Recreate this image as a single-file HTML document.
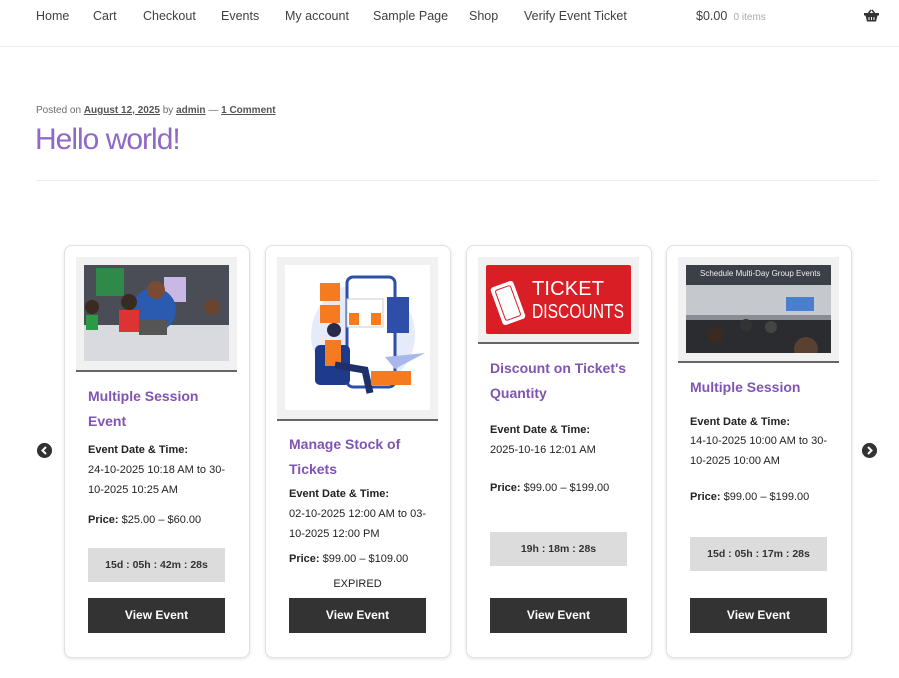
<!DOCTYPE html>
<html><head><meta charset="utf-8"><style>
*{margin:0;padding:0;box-sizing:border-box}
body{width:899px;height:678px;background:#fff;font-family:"Liberation Sans",sans-serif;color:#333;position:relative;overflow:hidden}
.a{position:absolute;white-space:nowrap}
.nav{top:8px;font-size:12.5px;color:#404040;line-height:16px}
.hr{position:absolute;left:0;width:899px;height:1px;background:#eee}
.card{position:absolute;top:245px;height:413px;width:186px;border:1px solid #e2e2e2;border-radius:8px;box-shadow:0 1px 3px rgba(0,0,0,.12);background:#fff}
.imgbox{position:absolute;background:#f1f1f1;border-bottom:2px solid #666}
.t{font-size:14px;color:#7f54b3;line-height:20px;font-weight:bold}
.l{font-size:11px;line-height:20px;color:#222}
.b{font-weight:bold}
.cd{position:absolute;width:137px;height:34px;background:#dcdcdc;font-size:10.5px;font-weight:bold;color:#333;text-align:center;line-height:34px}
.btn{position:absolute;width:137px;height:35px;top:598px;background:#333;color:#fff;font-size:12px;font-weight:bold;text-align:center;line-height:35px}
.arr{position:absolute;width:15px;height:15px;border-radius:50%;background:#333;top:443px}
</style></head><body>
<div class="a nav" style="left:36px">Home</div>
<div class="a nav" style="left:93px">Cart</div>
<div class="a nav" style="left:143px">Checkout</div>
<div class="a nav" style="left:221px">Events</div>
<div class="a nav" style="left:285px">My account</div>
<div class="a nav" style="left:373px">Sample Page</div>
<div class="a nav" style="left:469px">Shop</div>
<div class="a nav" style="left:524px">Verify Event Ticket</div>
<div class="a nav" style="left:696px">$0.00 <span style="font-size:10px;color:#aaa">&nbsp;0 items</span></div>
<svg class="a" style="left:864px;top:9px" width="15" height="13" viewBox="0 0 15 13"><path d="M4 5 L7 1 M11 5 L8 1" stroke="#333" stroke-width="1.5" fill="none"/><rect x="0" y="4" width="15" height="2.5" fill="#333"/><path d="M1.5 6.5 H13.5 L12 12.5 H3 Z" fill="#333"/><path d="M5 8v3M7.5 8v3M10 8v3" stroke="#fff" stroke-width="1"/></svg>
<div class="hr" style="top:46px"></div>
<div class="a" style="left:36px;top:105px;font-size:10px;color:#6d6d6d">Posted on <u style="color:#555;font-weight:bold">August 12, 2025</u> by <u style="color:#555;font-weight:bold">admin</u> — <u style="color:#555;font-weight:bold">1 Comment</u></div>
<div class="a" style="left:35px;top:123px;font-size:30px;color:#9068c8;letter-spacing:-1px">Hello world!</div>
<div class="hr" style="top:180px;left:36px;width:843px"></div>

<div class="card" style="left:64px"></div>
<div class="card" style="left:265px"></div>
<div class="card" style="left:466px"></div>
<div class="card" style="left:666px"></div>

<div class="imgbox" style="left:76px;top:257px;width:161px;height:115px"></div>
<svg class="a" style="left:84px;top:265px" width="145" height="96"><rect width="145" height="96" fill="#4a4d55"/><rect y="60" width="145" height="36" fill="#d8dadf"/><rect x="12" y="3" width="28" height="28" fill="#2f8a4a"/><rect x="80" y="12" width="22" height="25" fill="#c9b8e4"/><ellipse cx="70" cy="45" rx="22" ry="22" fill="#2a5bb0"/><circle cx="72" cy="25" r="9" fill="#7a4b34"/><circle cx="45" cy="37" r="8" fill="#3a2a22"/><rect x="35" y="45" width="20" height="22" fill="#d33"/><rect x="55" y="55" width="28" height="15" fill="#555"/><circle cx="128" cy="42" r="8" fill="#6a4430"/><circle cx="8" cy="42" r="7" fill="#3b2a20"/><rect x="2" y="50" width="12" height="15" fill="#2a9a45"/></svg>

<div class="imgbox" style="left:277px;top:257px;width:161px;height:164px"></div>
<svg class="a" style="left:285px;top:265px" width="145" height="145"><rect width="145" height="145" fill="#fff"/><circle cx="78" cy="70" r="52" fill="#e6ebfa"/><rect x="62" y="12" width="48" height="110" rx="6" fill="#fff" stroke="#2e4ea8" stroke-width="3"/><rect x="35" y="18" width="20" height="18" fill="#f47b20"/><rect x="35" y="40" width="20" height="18" fill="#f47b20"/><rect x="62" y="34" width="36" height="28" fill="#fff" stroke="#ccc"/><rect x="64" y="48" width="10" height="12" fill="#f47b20"/><rect x="86" y="48" width="10" height="12" fill="#f47b20"/><rect x="102" y="32" width="22" height="36" fill="#2e4ea8"/><path d="M100 92 L140 88 L110 104Z" fill="#a9b8ec"/><rect x="30" y="80" width="35" height="40" rx="5" fill="#1e3a8a"/><rect x="40" y="75" width="16" height="26" fill="#f47b20"/><circle cx="49" cy="65" r="7" fill="#2a2a4a"/><path d="M50 100 L80 105 L85 128" stroke="#1e2f6a" stroke-width="7" fill="none"/><rect x="86" y="106" width="40" height="14" fill="#f47b20"/></svg>

<div class="imgbox" style="left:478px;top:257px;width:161px;height:87px"></div>
<svg class="a" style="left:486px;top:265px" width="145" height="69"><rect width="145" height="69" rx="2" fill="#d91e26"/><g transform="rotate(-20 22 38)"><rect x="10" y="18" width="24" height="40" rx="3" fill="#fff"/><rect x="14" y="22" width="16" height="32" rx="2" fill="none" stroke="#d91e26" stroke-width="1"/></g><text x="46" y="30" font-family="Liberation Sans,sans-serif" font-size="20" fill="#fff" textLength="72">TICKET</text><text x="46" y="53" font-family="Liberation Sans,sans-serif" font-size="20" fill="#fff" textLength="92" lengthAdjust="spacingAndGlyphs">DISCOUNTS</text></svg>

<div class="imgbox" style="left:678px;top:257px;width:161px;height:106px"></div>
<svg class="a" style="left:686px;top:265px" width="145" height="88"><rect width="145" height="88" rx="2" fill="#8a8e94"/><rect y="0" width="145" height="20" fill="#3b3f47"/><rect x="0" y="20" width="145" height="30" fill="#c5c8cc"/><rect x="100" y="32" width="28" height="14" fill="#4a7fd0"/><rect x="0" y="55" width="145" height="33" fill="#2a2c30"/><circle cx="60" cy="60" r="6" fill="#333"/><circle cx="85" cy="62" r="6" fill="#444"/><circle cx="30" cy="70" r="8" fill="#3a2a20"/><circle cx="120" cy="84" r="12" fill="#5a4030"/><text x="14" y="11" font-size="8" fill="#eee" font-family="Liberation Sans,sans-serif">Schedule Multi-Day Group Events</text></svg>

<div class="a t" style="left:88px;top:386px">Multiple Session</div>
<div class="a t" style="left:88px;top:411px">Event</div>
<div class="a l b" style="left:88px;top:440px">Event Date &amp; Time:</div>
<div class="a l" style="left:88px;top:460px">24-10-2025 10:18 AM to 30-</div>
<div class="a l" style="left:88px;top:480px">10-2025 10:25 AM</div>
<div class="a l" style="left:88px;top:510px"><b>Price:</b> $25.00 – $60.00</div>
<div class="cd" style="left:88px;top:548px">15d : 05h : 42m : 28s</div>
<div class="btn" style="left:88px">View Event</div>

<div class="a t" style="left:289px;top:434px">Manage Stock of</div>
<div class="a t" style="left:289px;top:459px">Tickets</div>
<div class="a l b" style="left:289px;top:484px">Event Date &amp; Time:</div>
<div class="a l" style="left:289px;top:504px">02-10-2025 12:00 AM to 03-</div>
<div class="a l" style="left:289px;top:524px">10-2025 12:00 PM</div>
<div class="a l" style="left:289px;top:549px"><b>Price:</b> $99.00 – $109.00</div>
<div class="a l" style="left:289px;top:574px;width:137px;text-align:center">EXPIRED</div>
<div class="btn" style="left:289px">View Event</div>

<div class="a t" style="left:490px;top:358px">Discount on Ticket's</div>
<div class="a t" style="left:490px;top:383px">Quantity</div>
<div class="a l b" style="left:490px;top:420px">Event Date &amp; Time:</div>
<div class="a l" style="left:490px;top:440px">2025-10-16 12:01 AM</div>
<div class="a l" style="left:490px;top:478px"><b>Price:</b> $99.00 – $199.00</div>
<div class="cd" style="left:490px;top:532px">19h : 18m : 28s</div>
<div class="btn" style="left:490px">View Event</div>

<div class="a t" style="left:690px;top:377px">Multiple Session</div>
<div class="a l b" style="left:690px;top:412px">Event Date &amp; Time:</div>
<div class="a l" style="left:690px;top:431px">14-10-2025 10:00 AM to 30-</div>
<div class="a l" style="left:690px;top:451px">10-2025 10:00 AM</div>
<div class="a l" style="left:690px;top:487px"><b>Price:</b> $99.00 – $199.00</div>
<div class="cd" style="left:690px;top:537px">15d : 05h : 17m : 28s</div>
<div class="btn" style="left:690px">View Event</div>

<svg class="arr" style="left:37px" viewBox="0 0 15 15"><circle cx="7.5" cy="7.5" r="7.5" fill="#333"/><path d="M9 4 L5.5 7.5 L9 11" stroke="#fff" stroke-width="2" fill="none"/></svg>
<svg class="arr" style="left:862px" viewBox="0 0 15 15"><circle cx="7.5" cy="7.5" r="7.5" fill="#333"/><path d="M6 4 L9.5 7.5 L6 11" stroke="#fff" stroke-width="2" fill="none"/></svg>
</body></html>
